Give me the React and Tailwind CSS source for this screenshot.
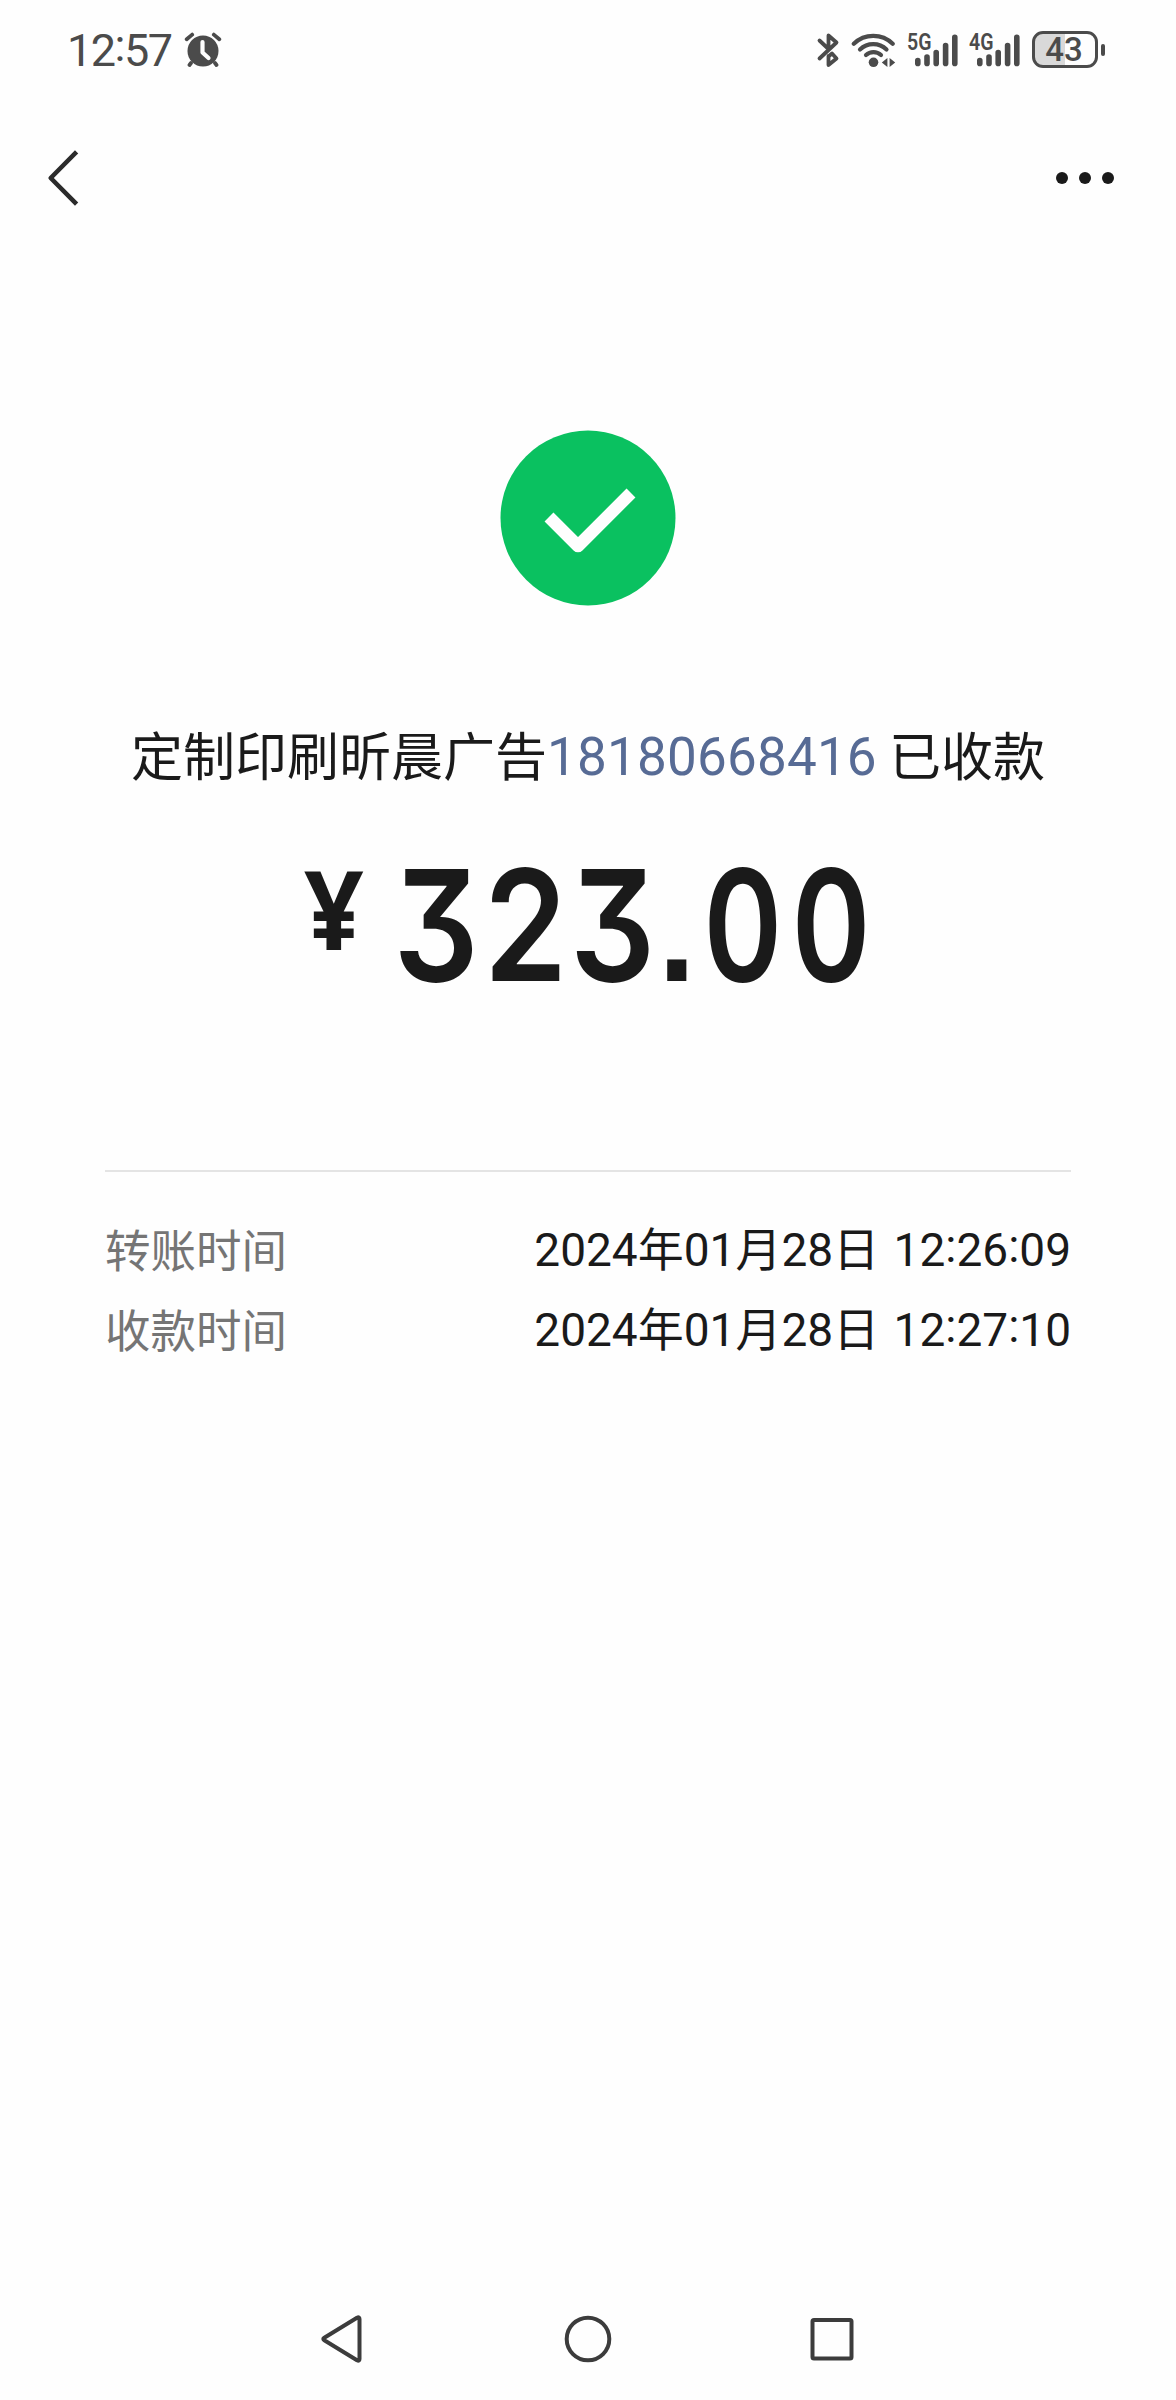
const mixed = "font-['Roboto','Noto_Sans_CJK_SC',sans-serif]";
const amount = "shrink-0 origin-left font-['Inter',sans-serif] font-semibold [font-feature-settings:'tnum','cv09','ss07']";

function AlarmIcon() {
  return (
    <svg className="ml-[13px] h-9 w-[38px]" viewBox="0 0 38 36" fill="none">
      <circle cx="19" cy="19" r="15.5" fill="#4b4b4b" />
      <path d="M2.7 7.2L8.2 2.6M35.3 7.2L29.8 2.6M7 31L5.5 33M31 31L32.5 33" stroke="#4b4b4b" strokeWidth="3.8" strokeLinecap="round" />
      <path d="M18.5 10V20.5L24.5 26" stroke="#fefefe" strokeWidth="4.2" strokeLinecap="round" strokeLinejoin="round" />
    </svg>
  );
}

function BluetoothIcon() {
  return (
    <svg className="h-9 w-6" viewBox="0 0 24 36" fill="none" stroke="#4b4b4b" strokeWidth="3.8" strokeLinecap="round" strokeLinejoin="round">
      <path d="M3.5 8.5L12.5 17V3.5L20.5 10.5L3.5 26.5" />
      <path d="M12.5 24V33L20.5 26.5L16 21.5L12.5 24.5" />
    </svg>
  );
}

function WifiIcon() {
  return (
    <svg className="ml-[11px] h-9 w-[46px]" viewBox="0 0 46 36" fill="none">
      <g stroke="#4b4b4b" strokeWidth="4.2" strokeLinecap="round">
        <path d="M2.8 11.7A28 28 0 0 1 41.7 11.7" />
        <path d="M9 17.5A19 19 0 0 1 35.5 17.5" />
        <path d="M15 23A11 11 0 0 1 30 23" />
      </g>
      <circle cx="22.5" cy="30.3" r="4.8" fill="#4b4b4b" />
      <path d="M30.8 30.5L36.4 26V35Z M44.2 30.5L38.6 26V35Z" fill="#4b4b4b" />
    </svg>
  );
}

function Signal({ label, className }) {
  return (
    <div className={`relative h-9 w-[52px] ${className}`}>
      <svg className="h-9 w-[52px]" viewBox="0 0 52 36" stroke="#4b4b4b" strokeWidth="5.6" strokeLinecap="round">
        <path d="M10.8 28.5V31.4M20 25V31.4M29.2 20.5V31.4M38.6 13.5V31.4M47.8 5.2V31.4" />
      </svg>
      <span className="absolute top-[2px] left-0 origin-left scale-x-[0.85] font-['Roboto',sans-serif] text-[23px] leading-[18px] font-semibold text-[#4b4b4b]">
        {label}
      </span>
    </div>
  );
}

function Battery() {
  return (
    <div className="ml-[11px] flex items-center gap-[3px]">
      <div className="flex h-[37px] w-[66px] items-center justify-center rounded-[11px] border-[3px] border-[#4b4b4b] bg-[linear-gradient(90deg,#d9d9d9_50%,#fefefe_50%)]">
        <span className="pr-[2px] font-['Roboto',sans-serif] text-[33px] leading-none font-medium text-[#4b4b4b]">43</span>
      </div>
      <div className="h-3 w-1 rounded-full bg-[#4b4b4b]" />
    </div>
  );
}

function Clock({ value }) {
  return value.split(":").map((part, i) => (
    <span key={i}>
      {i > 0 && <span className="relative bottom-[0.09em]">:</span>}
      {part}
    </span>
  ));
}

function StatusBar() {
  return (
    <header className="flex h-[99px] items-center pr-[71px] pl-[67px]">
      <span className="w-[104px] pt-px font-['Roboto',sans-serif] text-[45px] leading-none font-[450] tracking-[-1.5px] whitespace-nowrap text-[#4b4b4b]">
        <Clock value="12:57" />
      </span>
      <AlarmIcon />
      <div className="ml-auto flex items-center">
        <BluetoothIcon />
        <WifiIcon />
        <Signal label="5G" className="ml-[10px]" />
        <Signal label="4G" className="ml-[10px]" />
        <Battery />
      </div>
    </header>
  );
}

function NavBar() {
  return (
    <nav className="flex h-[158px] items-center justify-between pr-[62px] pl-[47px]">
      <svg className="h-[58px] w-[34px]" viewBox="0 0 34 58" fill="none" stroke="#2b2b2b" strokeWidth="4.6" strokeLinecap="square" strokeLinejoin="round">
        <path d="M28 4.5L3.7 29L28 53.5" />
      </svg>
      <div className="flex gap-[11px]">
        <i className="size-[12px] rounded-full bg-[#1a1a1a]" />
        <i className="size-[12px] rounded-full bg-[#1a1a1a]" />
        <i className="size-[12px] rounded-full bg-[#1a1a1a]" />
      </div>
    </nav>
  );
}

function DetailRow({ label, date, time }) {
  return (
    <div className="flex h-20 items-center justify-between text-[46px] leading-none">
      <dt className="pb-[3px] text-[45.5px] text-[#757575]">{label}</dt>
      <dd className={`${mixed} whitespace-nowrap text-[#1a1a1a] [word-spacing:3px]`}>
        {date} <Clock value={time} />
      </dd>
    </div>
  );
}

export default function App() {
  return (
    <div className="flex h-[2400px] w-[1176px] flex-col overflow-hidden bg-[#fefefe] font-['Noto_Sans_CJK_SC',sans-serif]">
      <StatusBar />
      <NavBar />
      <main className="flex flex-col items-center">
        <svg className="mt-[173px] size-[176px]" viewBox="0 0 176 176" fill="none">
          <circle cx="88" cy="88" r="87.5" fill="#0ac160" />
          <path d="M49 87L78 116L131 63" stroke="#fefefe" strokeWidth="12.6" strokeLinejoin="round" />
        </svg>
        <h1 className="mt-[108px] flex h-20 items-center text-[52px] leading-none whitespace-nowrap text-[#1a1a1a]">
          定制印刷昕晨广告
          <span className="w-[342px] pt-[6px] font-['Roboto',sans-serif] text-[53px] tracking-[0.2px] text-[#576b95]">18180668416</span>
          已收款
        </h1>
        <div className="mt-[56px] flex h-[150px] w-[566px] items-start text-[154px] leading-[150px] whitespace-nowrap text-[#1a1a1a]">
          <span className="-ml-px w-[90px] shrink-0 origin-left scale-x-[0.95] pt-[2px] font-['Noto_Sans',sans-serif] text-[110px] leading-[110px] font-bold">¥</span>
          <span className={`${amount} -mr-[39px] w-[304px] scale-x-[0.87] tracking-[1.8px]`}>323</span>
          <span className={`${amount} -mr-[5px] w-[49px] scale-x-[0.86]`}>.</span>
          <span className={`${amount} -mr-[44px] w-[220px] scale-x-[0.8] tracking-[10.6px]`}>00</span>
        </div>
      </main>
      <dl className="mx-[105px] mt-[170px] border-t-2 border-[#e4e4e4] pt-[38px]">
        <DetailRow label="转账时间" date="2024年01月28日" time="12:26:09" />
        <DetailRow label="收款时间" date="2024年01月28日" time="12:27:10" />
      </dl>
      <footer className="mt-auto flex h-[122px] items-center justify-center gap-[197px]">
        <svg className="size-[48px]" viewBox="0 0 48 48" fill="none" stroke="#3c3c3c" strokeWidth="4" strokeLinejoin="round">
          <path d="M5.3 22.7L38 2.7Q40.5 1.5 40.5 4V44Q40.5 46.5 38 45.3L5.3 25.3Q3.3 24 5.3 22.7Z" />
        </svg>
        <svg className="size-[48px]" viewBox="0 0 48 48" fill="none" stroke="#3c3c3c" strokeWidth="4">
          <circle cx="24" cy="24" r="21.3" />
        </svg>
        <svg className="size-[48px]" viewBox="0 0 48 48" fill="none" stroke="#3c3c3c" strokeWidth="4">
          <rect x="3.5" y="5" width="39" height="38.5" rx="1.5" />
        </svg>
      </footer>
    </div>
  );
}
